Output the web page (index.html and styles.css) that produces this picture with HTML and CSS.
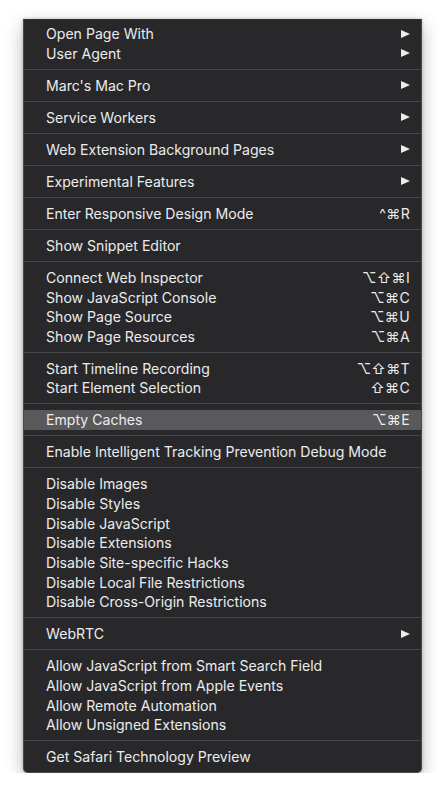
FILE: index.html
```html
<!DOCTYPE html>
<html>
<head>
<meta charset="utf-8">
<link rel="stylesheet" href="styles.css">
</head>
<body>
<div class="menu">
  <div class="item"><span class="label">Open Page With</span><span class="arrow"></span></div>
  <div class="item"><span class="label">User Agent</span><span class="arrow"></span></div>
  <div class="sep"></div>
  <div class="item"><span class="label">Marc's Mac Pro</span><span class="arrow"></span></div>
  <div class="sep"></div>
  <div class="item"><span class="label">Service Workers</span><span class="arrow"></span></div>
  <div class="sep"></div>
  <div class="item"><span class="label">Web Extension Background Pages</span><span class="arrow"></span></div>
  <div class="sep"></div>
  <div class="item"><span class="label">Experimental Features</span><span class="arrow"></span></div>
  <div class="sep"></div>
  <div class="item"><span class="label">Enter Responsive Design Mode</span><span class="key">^⌘R</span></div>
  <div class="sep"></div>
  <div class="item"><span class="label">Show Snippet Editor</span></div>
  <div class="sep"></div>
  <div class="item"><span class="label">Connect Web Inspector</span><span class="key">⌥⇧⌘I</span></div>
  <div class="item"><span class="label">Show JavaScript Console</span><span class="key">⌥⌘C</span></div>
  <div class="item"><span class="label">Show Page Source</span><span class="key">⌥⌘U</span></div>
  <div class="item"><span class="label">Show Page Resources</span><span class="key">⌥⌘A</span></div>
  <div class="sep"></div>
  <div class="item"><span class="label">Start Timeline Recording</span><span class="key">⌥⇧⌘T</span></div>
  <div class="item"><span class="label">Start Element Selection</span><span class="key">⇧⌘C</span></div>
  <div class="sep"></div>
  <div class="item selected"><span class="label">Empty Caches</span><span class="key">⌥⌘E</span></div>
  <div class="sep"></div>
  <div class="item"><span class="label">Enable Intelligent Tracking Prevention Debug Mode</span></div>
  <div class="sep"></div>
  <div class="item"><span class="label">Disable Images</span></div>
  <div class="item"><span class="label">Disable Styles</span></div>
  <div class="item"><span class="label">Disable JavaScript</span></div>
  <div class="item"><span class="label">Disable Extensions</span></div>
  <div class="item"><span class="label">Disable Site-specific Hacks</span></div>
  <div class="item"><span class="label">Disable Local File Restrictions</span></div>
  <div class="item"><span class="label">Disable Cross-Origin Restrictions</span></div>
  <div class="sep"></div>
  <div class="item"><span class="label">WebRTC</span><span class="arrow"></span></div>
  <div class="sep"></div>
  <div class="item"><span class="label">Allow JavaScript from Smart Search Field</span></div>
  <div class="item"><span class="label">Allow JavaScript from Apple Events</span></div>
  <div class="item"><span class="label">Allow Remote Automation</span></div>
  <div class="item"><span class="label">Allow Unsigned Extensions</span></div>
  <div class="sep"></div>
  <div class="item"><span class="label">Get Safari Technology Preview</span></div>
</div>
</body>
</html>
```

FILE: styles.css
```css
html, body {
  margin: 0;
  padding: 0;
  background: #ffffff;
}
body {
  font-family: "Inter", "DejaVu Sans", sans-serif;
  font-size: 14.1px;
  color: #ececec;
}
.menu {
  margin: 19px 0 0 23px;
  width: 399px;
  box-sizing: border-box;
  background: #28282b;
  border: 1px solid #4a4a4d;
  border-top-color: #2f2f32;
  border-radius: 0 0 5px 5px;
  padding: 4px 0 5px;
  box-shadow: 0 6px 18px rgba(0, 0, 0, 0.28), 0 0 3px rgba(0, 0, 0, 0.25);
}
.item {
  height: 19.67px;
  display: flex;
  align-items: center;
  justify-content: space-between;
  padding: 0 11px 0 22px;
  white-space: nowrap;
}
.item.selected {
  background: #59595b;
}
.key {
  letter-spacing: 0.3px;
}
.arrow {
  width: 0;
  height: 0;
  border-left: 9px solid #ececec;
  border-top: 4.5px solid transparent;
  border-bottom: 4.5px solid transparent;
}
.sep {
  height: 12.33px;
  display: flex;
  align-items: center;
}
.sep::before {
  content: "";
  display: block;
  width: 100%;
  height: 1px;
  background: #47474a;
}
```
